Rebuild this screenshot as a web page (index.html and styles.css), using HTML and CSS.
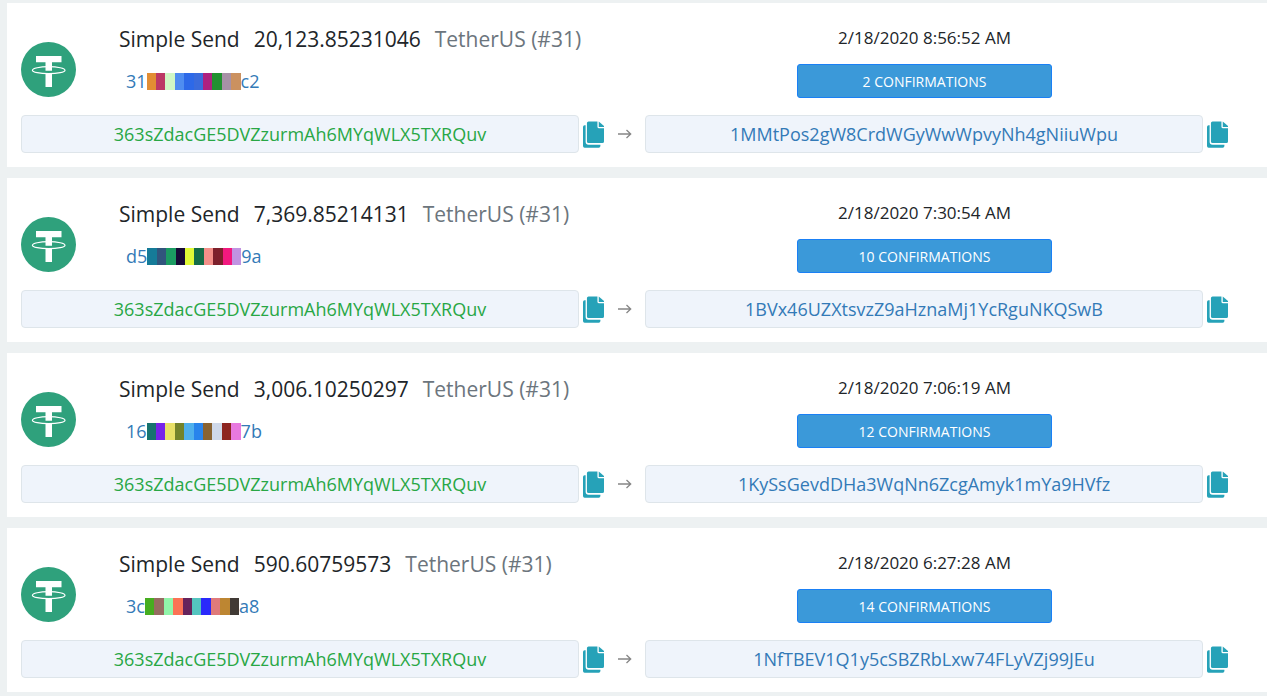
FILE: index.html
```html
<!DOCTYPE html>
<html lang="en">
<head>
    <meta charset="UTF-8">
    <meta name="viewport" content="width=device-width, initial-scale=1.0">
    <title>Transactions</title>
    <link rel="stylesheet" href="styles.css">
</head>
<body>
    <svg class="symbols" aria-hidden="true">
        <symbol id="tether" viewBox="0 0 55 55">
            <circle cx="27.5" cy="27.5" r="27.5" fill="#2fa17c"/>
            <path d="M15 14h25.500v6.300H31v8.500h-6.500v-8.500H15z" fill="#fff"/>
            <path d="M24.500 31.300H31V45h-6.500z" fill="#fff"/>
            <ellipse cx="27.700" cy="28.200" rx="16.300" ry="3.500" fill="none" stroke="#fff" stroke-width="1.200"/>
        </symbol>
        <symbol id="copy" viewBox="0 0 64 80">
            <path d="M8 12H5q-5 0-5 5v58q0 5 5 5h43q5 0 5-5v-4H17q-9 0-9-9z"/>
            <path d="M44 0H17q-5 0-5 5v56q0 5 5 5h42q5 0 5-5V21H49q-5 0-5-5z"/>
            <path d="M48 0l16 14v3H48z"/>
        </symbol>
        <symbol id="arrow" viewBox="0 0 14 10">
            <path d="M0 5h13M8.500 1l4.200 4-4.200 4" fill="none" stroke="#868686" stroke-width="1.300"/>
        </symbol>
    </svg>

    <main class="list"></main>

    <script>
        const sender = '363sZdacGE5DVZzurmAh6MYqWLX5TXRQuv';

        const transactions = [
            {
                amount: '20,123.85231046',
                date: '2/18/2020 8:56:52 AM',
                confirmations: 2,
                to: '1MMtPos2gW8CrdWGyWwWpvyNh4gNiiuWpu',
                hash: ['31', 'c2'],
                colors: ['#e28d33', '#bc3865', '#d0f7c5', '#4f8df0', '#2d69e8', '#3a6bdc', '#ae217f', '#229130', '#a791a6', '#cb9160']
            },
            {
                amount: '7,369.85214131',
                date: '2/18/2020 7:30:54 AM',
                confirmations: 10,
                to: '1BVx46UZXtsvzZ9aHznaMj1YcRguNKQSwB',
                hash: ['d5', '9a'],
                colors: ['#157b98', '#31557d', '#1b9b62', '#170b36', '#e0f937', '#146c48', '#f38f89', '#7d202c', '#f2197f', '#c193e2']
            },
            {
                amount: '3,006.10250297',
                date: '2/18/2020 7:06:19 AM',
                confirmations: 12,
                to: '1KySsGevdDHa3WqNn6ZcgAmyk1mYa9HVfz',
                hash: ['16', '7b'],
                colors: ['#17736e', '#7623e9', '#e8e067', '#73832a', '#4fb0ec', '#2884ec', '#896332', '#cfd9ea', '#8d2520', '#e879df']
            },
            {
                amount: '590.60759573',
                date: '2/18/2020 6:27:28 AM',
                confirmations: 14,
                to: '1NfTBEV1Q1y5cSBZRbLxw74FLyVZj99JEu',
                hash: ['3c', 'a8'],
                colors: ['#46ad20', '#966c61', '#91f5aa', '#fb7255', '#67235c', '#54c4bf', '#2a29fb', '#df7a7b', '#bd8632', '#413a35']
            }
        ];

        function copyButton() {
            return '<button type="button" class="copy" aria-label="Copy address"><svg><use href="#copy"/></svg></button>';
        }

        document.querySelector('.list').innerHTML = transactions.map(tx => `
            <section class="card">
                <div class="summary">
                    <svg class="logo"><use href="#tether"/></svg>
                    <div class="info">
                        <div class="title">
                            <span>Simple Send</span>
                            <span>${tx.amount}</span>
                            <span class="token">TetherUS (#31)</span>
                        </div>
                        <a href="#" class="hash">${tx.hash[0]}<span class="swatches">${tx.colors.map(c => `<i style="background:${c}"></i>`).join('')}</span>${tx.hash[1]}</a>
                    </div>
                </div>
                <div class="state">
                    <div class="date">${tx.date}</div>
                    <button type="button" class="confirmations">${tx.confirmations} CONFIRMATIONS</button>
                </div>
                <div class="address">
                    <a href="#" class="box from">${sender}</a>
                    ${copyButton()}
                </div>
                <svg class="arrow"><use href="#arrow"/></svg>
                <div class="address">
                    <a href="#" class="box">${tx.to}</a>
                    ${copyButton()}
                </div>
            </section>
        `).join('');
    </script>
</body>
</html>
```
FILE: styles.css
```css
* {
    box-sizing: border-box;
}

body {
    margin: 0;
    background-color: #edf1f2;
    color: #212529;
    font-family: 'Open Sans', sans-serif;
    font-size: 18px;
    overflow-x: hidden;
}

a {
    color: #337ab7;
    text-decoration: none;
}

.symbols {
    display: none;
}

.list {
    display: flex;
    flex-direction: column;
    gap: 11px;
    padding: 3px 0 4px 7px;
}

.card {
    display: grid;
    grid-template-columns: 1fr 41px 1fr;
    align-items: center;
    background-color: #fff;
    padding: 20px 39px 14px 14px;
}

.summary {
    display: flex;
    grid-column: 1 / 3;
    height: 92px;
}

.logo {
    width: 55px;
    height: 55px;
    margin: 19px 43px 0 0;
}

.title {
    display: flex;
    gap: 14px;
    font-size: 21px;
    line-height: 32px;
    white-space: nowrap;
}

.token {
    color: #6c757d;
}

.hash {
    display: flex;
    align-items: center;
    margin: 12px 0 0 7px;
    line-height: 28px;
}

.swatches {
    display: flex;
    width: 94px;
    height: 17px;
}

.swatches i {
    flex: 1;
}

.state {
    height: 92px;
    padding-right: 24px;
    text-align: center;
}

.date {
    font-size: 17px;
    line-height: 30px;
    margin-bottom: 11px;
}

.confirmations {
    width: 255px;
    height: 34px;
    border: 1px solid #1a80f5;
    border-radius: 3px;
    background-color: #3b99d9;
    color: #fff;
    font-family: inherit;
    font-size: 14px;
    cursor: pointer;
}

.address {
    display: flex;
    align-items: center;
    gap: 4px;
}

.box {
    flex: 1;
    border: 1px solid #dee5ea;
    border-radius: 4px;
    background-color: #eff4fb;
    line-height: 36px;
    text-align: center;
}

.from {
    color: #28a745;
}

.copy {
    width: 21px;
    height: 27px;
    padding: 0;
    border: 0;
    background: none;
    color: #26a2b8;
    cursor: pointer;
}

.copy svg {
    display: block;
    width: 100%;
    height: 100%;
    fill: currentColor;
}

.arrow {
    justify-self: center;
    width: 14px;
    height: 10px;
}
```
